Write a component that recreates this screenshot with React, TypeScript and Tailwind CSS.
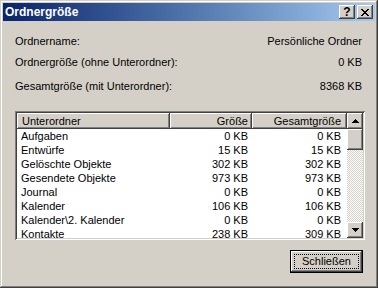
const raised =
  "shadow-[inset_-1px_-1px_#404040,inset_1px_1px_#ffffff,inset_-2px_-2px_#808080,inset_2px_2px_#d4d0c8]";

const rows: [string, string, string][] = [
  ["Aufgaben", "0 KB", "0 KB"],
  ["Entwürfe", "15 KB", "15 KB"],
  ["Gelöschte Objekte", "302 KB", "302 KB"],
  ["Gesendete Objekte", "973 KB", "973 KB"],
  ["Journal", "0 KB", "0 KB"],
  ["Kalender", "106 KB", "106 KB"],
  ["Kalender\\2. Kalender", "0 KB", "0 KB"],
  ["Kontakte", "238 KB", "309 KB"],
];

export default function App() {
  return (
    <div
      className={`flex h-[288px] w-[378px] flex-col bg-[#d4d0c8] p-[3px] font-['Liberation_Sans',Arial,sans-serif] text-[11px] text-black shadow-[inset_-1px_-1px_#404040,inset_1px_1px_#d4d0c8,inset_-2px_-2px_#808080,inset_2px_2px_#ffffff]`}
    >
      {/* caption */}
      <div className="flex h-[18px] items-center bg-gradient-to-r from-[#0a246a] to-[#a6caf0] pl-[2px] pr-[2px]">
        <span className="text-[12px] font-bold leading-none text-white">Ordnergröße</span>
        <div className="ml-auto flex gap-[2px]">
          <CaptionButton>
            <span className="text-[12px] font-bold leading-none">?</span>
          </CaptionButton>
          <CaptionButton>
            <svg width="8" height="7" viewBox="0 0 8 7" shapeRendering="crispEdges">
              {[
                [0, 0], [6, 0], [1, 1], [5, 1], [2, 2], [3, 3], [2, 4], [1, 5], [5, 5], [0, 6], [6, 6],
              ].map(([x, y]) => (
                <rect key={`${x}-${y}`} x={x} y={y} width={2} height={1} fill="#000" />
              ))}
              <rect x={4} y={2} width={2} height={1} fill="#000" />
              <rect x={4} y={4} width={2} height={1} fill="#000" />
            </svg>
          </CaptionButton>
        </div>
      </div>

      {/* body */}
      <div className="flex flex-1 flex-col pl-[12px] pr-[10px] pt-[14px]">
        <InfoRow label="Ordnername:" value="Persönliche Ordner" />
        <InfoRow className="mt-[8px]" label="Ordnergröße (ohne Unterordner):" value="0 KB" />
        <InfoRow className="mt-[11px]" label="Gesamtgröße (mit Unterordner):" value="8368 KB" />

        {/* list view */}
        <div className="mt-[18px] flex h-[129px] w-[350px] bg-white p-[2px] shadow-[inset_1px_1px_#808080,inset_-1px_-1px_#ffffff,inset_2px_2px_#404040,inset_-2px_-2px_#d4d0c8]">
          <div className="flex-1 overflow-hidden">
            <div className="flex h-[16px] leading-[16px]">
              <div className={`w-[153px] bg-[#d4d0c8] pl-[5px] ${raised}`}>Unterordner</div>
              <div className={`w-[82px] bg-[#d4d0c8] pr-[4px] text-right ${raised}`}>Größe</div>
              <div className={`w-[95px] bg-[#d4d0c8] pr-[6px] text-right ${raised}`}>Gesamtgröße</div>
            </div>
            {rows.map(([name, size, total]) => (
              <div key={name} className="flex h-[14px] leading-[14px]">
                <div className="w-[153px] pl-[4px]">{name}</div>
                <div className="w-[82px] pr-[4px] text-right">{size}</div>
                <div className="w-[95px] pr-[6px] text-right">{total}</div>
              </div>
            ))}
          </div>

          {/* scrollbar */}
          <div className="flex w-[16px] flex-col">
            <div className={`flex h-[16px] items-center justify-center bg-[#d4d0c8] ${raised}`}>
              <Arrow up />
            </div>
            <div className={`h-[21px] bg-[#d4d0c8] ${raised}`} />
            <div className="flex-1 bg-[image:repeating-conic-gradient(#d4d0c8_0_25%,#ffffff_0_50%)] bg-[length:2px_2px]" />
            <div className={`flex h-[16px] items-center justify-center bg-[#d4d0c8] ${raised}`}>
              <Arrow />
            </div>
          </div>
        </div>

        <div className="mt-[10px] flex justify-end pr-[2px]">
          <button className={`h-[23px] w-[73px] border border-black bg-[#d4d0c8] p-[3px] ${raised}`}>
            <div className="flex h-full items-center justify-center border border-dotted border-black leading-none">
              Schließen
            </div>
          </button>
        </div>
      </div>
    </div>
  );
}

function CaptionButton({ children }: { children: React.ReactNode }) {
  return (
    <div className={`flex h-[14px] w-[16px] items-center justify-center bg-[#d4d0c8] ${raised}`}>
      {children}
    </div>
  );
}

function InfoRow({ label, value, className = "" }: { label: string; value: string; className?: string }) {
  return (
    <div className={`flex h-[13px] justify-between pr-[3px] leading-[13px] ${className}`}>
      <span>{label}</span>
      <span>{value}</span>
    </div>
  );
}

function Arrow({ up = false }: { up?: boolean }) {
  const rowsPx = up ? [3, 2, 1, 0] : [0, 1, 2, 3];
  return (
    <svg width="7" height="4" viewBox="0 0 7 4" shapeRendering="crispEdges">
      {rowsPx.map((inset, y) => (
        <rect key={y} x={inset} y={y} width={7 - inset * 2} height={1} fill="#000" />
      ))}
    </svg>
  );
}
